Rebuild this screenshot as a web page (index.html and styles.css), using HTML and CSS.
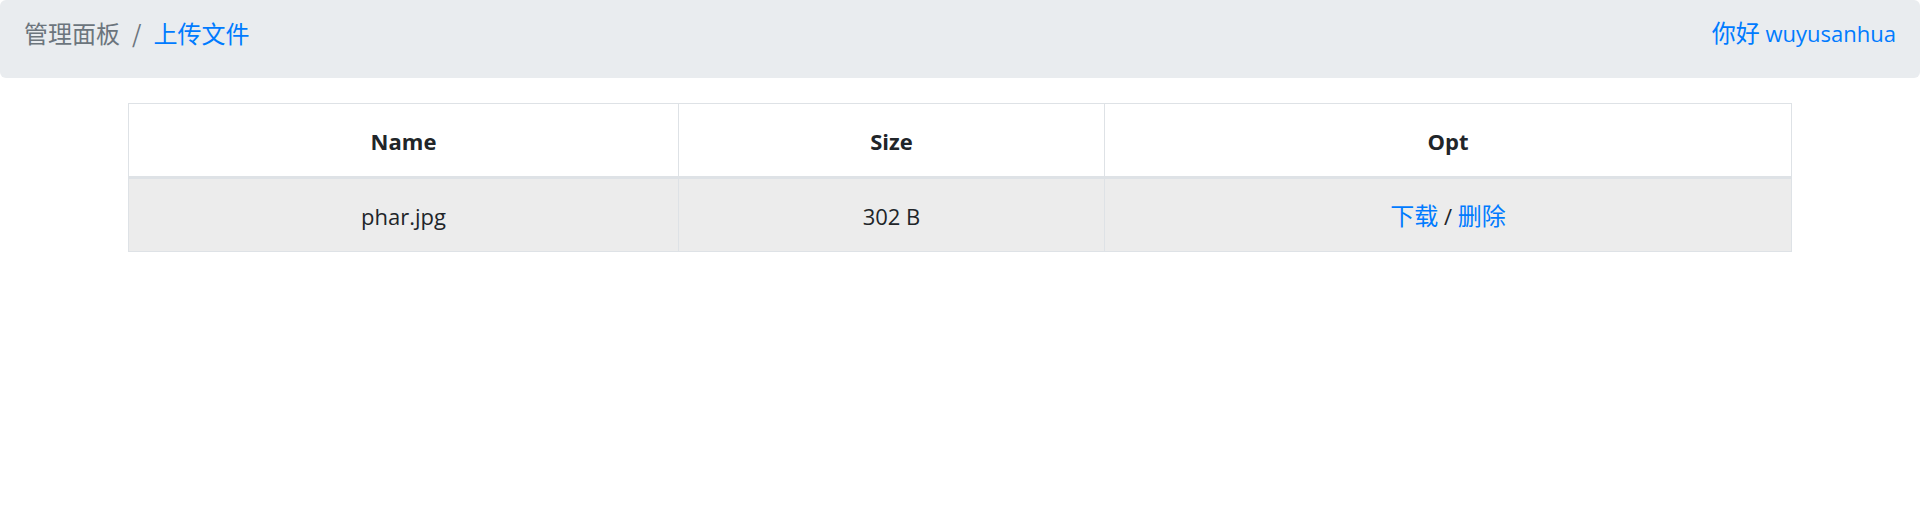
FILE: index.html
```html
<!DOCTYPE html>
<html lang="zh-CN">
<head>
<meta charset="utf-8">
<title>上传文件</title>
<link rel="stylesheet" href="styles.css">
</head>
<body>
<nav class="crumbs">
  <ol class="crumb-list">
    <li class="crumb zh">管理面板</li>
    <li class="crumb crumb-active zh"><a href="#">上传文件</a></li>
  </ol>
  <a class="hello" href="#"><span class="zh zh-inline">你好</span> wuyusanhua</a>
</nav>
<main class="content">
  <table class="files">
    <colgroup>
      <col class="c1"><col class="c2"><col class="c3">
    </colgroup>
    <thead>
      <tr><th>Name</th><th>Size</th><th>Opt</th></tr>
    </thead>
    <tbody>
      <tr class="row">
        <td>phar.jpg</td>
        <td>302 B</td>
        <td><a class="zh zh-inline" href="#">下载</a> / <a class="zh zh-inline" href="#">删除</a></td>
      </tr>
    </tbody>
  </table>
</main>
</body>
</html>
```

FILE: styles.css
```css
html, body {
  margin: 0;
  padding: 0;
  background: #fff;
}
body {
  font-family: "Open Sans", "Noto Sans CJK SC", sans-serif;
  font-size: 22px;
  line-height: 36px;
  color: #212529;
}
.zh {
  font-family: "Noto Sans CJK SC", "Open Sans", sans-serif;
  font-size: 24px;
}
.zh-inline {
  line-height: 24px;
}
a {
  color: #007bff;
  text-decoration: none;
}
.crumbs {
  display: flex;
  justify-content: space-between;
  align-items: flex-start;
  background: #e9ecef;
  border-radius: 6px;
  padding: 15px 24px 27px 24px;
  height: 36px;
}
.crumb-list {
  display: flex;
  list-style: none;
  margin: 0;
  padding: 0;
}
.crumb {
  color: #6c757d;
}
.crumb + .crumb {
  padding-left: 12px;
}
.crumb + .crumb::before {
  content: "/";
  color: #6c757d;
  padding-right: 12px;
}
.content {
  padding: 25px 128px 0 128px;
}
.files {
  width: 100%;
  border-collapse: collapse;
  table-layout: fixed;
  text-align: center;
}
.c1 { width: 550px; }
.c2 { width: 426px; }
.files th,
.files td {
  border: 1px solid #dee2e6;
  padding: 19px 18px 17px 18px;
  height: 36px;
}
.files th {
  font-weight: 700;
  vertical-align: bottom;
  border-bottom: 3px solid #dee2e6;
}
.row {
  background: #ececec;
}
```
